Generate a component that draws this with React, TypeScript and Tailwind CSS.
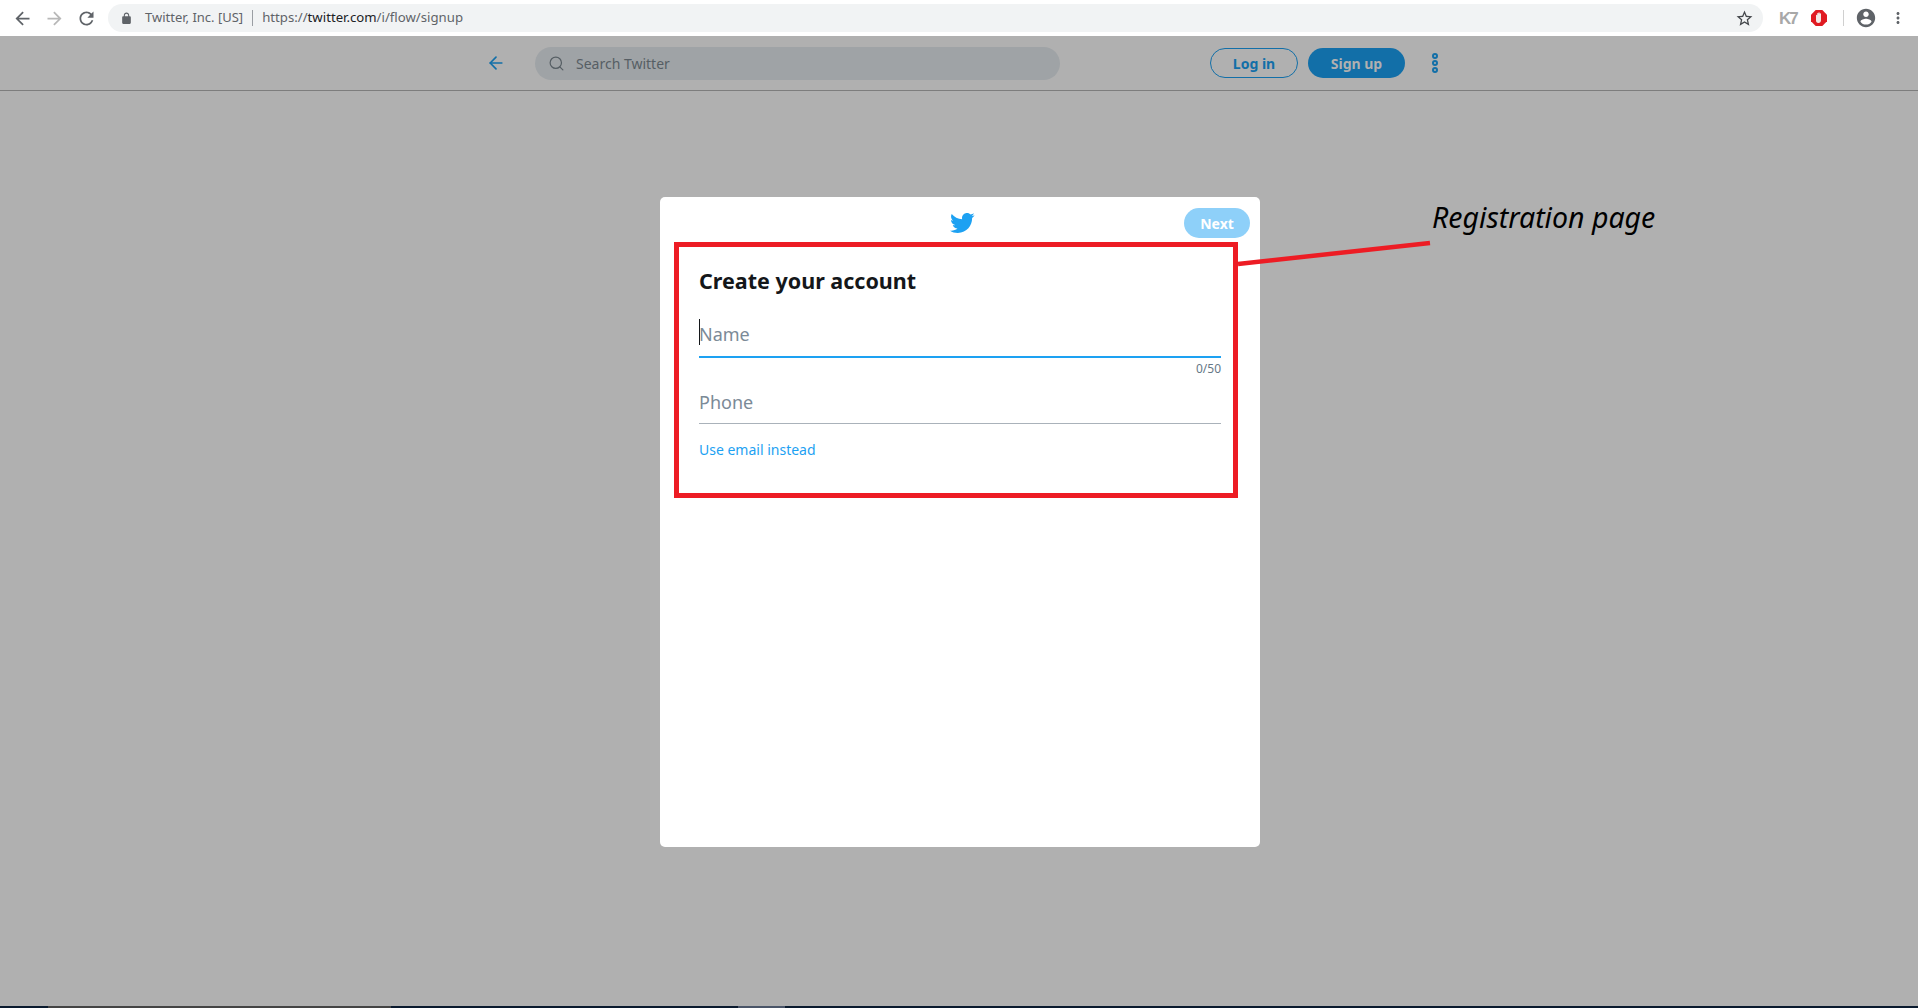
import { Search, ArrowLeft } from "lucide-react";

const BIRD =
  "M23.643 4.937c-.835.37-1.732.62-2.675.733.962-.576 1.7-1.49 2.048-2.578-.9.534-1.897.922-2.958 1.13-.85-.904-2.06-1.47-3.4-1.47-2.572 0-4.658 2.086-4.658 4.66 0 .364.042.718.12 1.06-3.873-.195-7.304-2.05-9.602-4.868-.4.69-.63 1.49-.63 2.342 0 1.616.823 3.043 2.072 3.878-.764-.025-1.482-.234-2.11-.583v.06c0 2.257 1.605 4.14 3.737 4.568-.392.106-.803.162-1.227.162-.3 0-.593-.028-.877-.082.593 1.85 2.313 3.198 4.352 3.234-1.595 1.25-3.604 1.995-5.786 1.995-.376 0-.747-.022-1.112-.065 2.062 1.323 4.51 2.093 7.14 2.093 8.57 0 13.255-7.098 13.255-13.254 0-.2-.005-.402-.014-.602.91-.658 1.7-1.477 2.323-2.41z";

const Glyph = ({ d, className }: { d: string; className: string }) => (
  <svg viewBox="0 0 24 24" className={className}>
    <path d={d} />
  </svg>
);

const BrowserBar = () => (
  <div className="h-9 shrink-0 bg-white flex items-center text-[#5f6368]">
    <Glyph
      d="M20 11H7.83l5.59-5.59L12 4l-8 8 8 8 1.41-1.41L7.83 13H20v-2z"
      className="ml-[12px] w-[21px] h-[21px] fill-[#5f6368]"
    />
    <Glyph
      d="M12 4l-1.41 1.41L16.17 11H4v2h12.17l-5.58 5.59L12 20l8-8z"
      className="ml-[11px] w-[21px] h-[21px] fill-[#b8b8b8]"
    />
    <Glyph
      d="M17.65 6.35C16.2 4.9 14.21 4 12 4c-4.42 0-7.99 3.58-7.99 8s3.57 8 7.99 8c3.73 0 6.84-2.55 7.73-6h-2.08c-.82 2.33-3.04 4-5.65 4-3.31 0-6-2.69-6-6s2.69-6 6-6c1.66 0 3.14.69 4.22 1.78L13 11h7V4l-2.35 2.35z"
      className="ml-[11px] w-[21px] h-[21px] fill-[#5f6368]"
    />
    <div className="ml-[11px] w-[1655px] h-7 rounded-full bg-[#f1f3f4] flex items-center text-[13px] font-['Noto_Sans',sans-serif]">
      <Glyph
        d="M18 8h-1V6c0-2.76-2.24-5-5-5S7 3.24 7 6v2H6c-1.1 0-2 .9-2 2v10c0 1.1.9 2 2 2h12c1.1 0 2-.9 2-2V10c0-1.1-.9-2-2-2zM9 6c0-1.66 1.34-3 3-3s3 1.34 3 3v2H9V6z"
        className="ml-[12px] w-[13px] h-[13px] fill-[#5f6368]"
      />
      <span className="ml-[12px]">Twitter, Inc. [US]</span>
      <span className="mx-[9px] w-px h-4 bg-[#9a9ea3]" />
      <span className="text-[13.2px]">
        https://<span className="text-[#202124]">twitter.com</span>/i/flow/signup
      </span>
      <Glyph
        d="M22 9.24l-7.19-.62L12 2 9.19 8.63 2 9.24l5.46 4.73L5.82 21 12 17.27 18.18 21l-1.63-7.03L22 9.24zM12 15.4l-3.76 2.27 1-4.28-3.32-2.88 4.38-.38L12 6.1l1.71 4.04 4.38.38-3.32 2.88 1 4.28L12 15.4z"
        className="ml-auto mr-[9px] w-[19px] h-[19px] fill-[#44474b]"
      />
    </div>
    <span className="ml-[16px] w-4 text-[17px] leading-none font-bold tracking-[-2px] text-[#a8a8a8] font-['Liberation_Sans',sans-serif]">K7</span>
    {/* adblock badge */}
    <svg viewBox="0 0 16 16" className="ml-[16px] w-4 h-4">
      <polygon points="4.7,0 11.3,0 16,4.7 16,11.3 11.3,16 4.7,16 0,11.3 0,4.7" fill="#e01b22" />
      <path d="M5 5.5c0-.9 1.2-.9 1.2 0V3.6c0-.9 1.2-.9 1.2 0V3c0-.9 1.3-.9 1.3 0v.8c0-.9 1.3-.9 1.3 0v6.4c0 1.4-.9 2.8-2.6 2.8-1.6 0-2.4-1-2.4-2.4z" fill="#f3e9e6" />
    </svg>
    <span className="ml-[16px] w-px h-4 bg-[#d0d0d0]" />
    <Glyph
      d="M12 2C6.48 2 2 6.48 2 12s4.48 10 10 10 10-4.48 10-10S17.52 2 12 2zm0 3c1.66 0 3 1.34 3 3s-1.34 3-3 3-3-1.34-3-3 1.34-3 3-3zm0 14.2c-2.5 0-4.71-1.28-6-3.22.03-1.99 4-3.08 6-3.08 1.99 0 5.97 1.09 6 3.08-1.29 1.94-3.5 3.22-6 3.22z"
      className="ml-[11px] w-[22px] h-[22px] fill-[#5f6368]"
    />
    <Glyph
      d="M12 8c1.1 0 2-.9 2-2s-.9-2-2-2-2 .9-2 2 .9 2 2 2zm0 2c-1.1 0-2 .9-2 2s.9 2 2 2 2-.9 2-2-.9-2-2-2zm0 6c-1.1 0-2 .9-2 2s.9 2 2 2 2-.9 2-2-.9-2-2-2z"
      className="ml-[12px] w-[18px] h-[18px] fill-[#5f6368]"
    />
  </div>
);

const TwitterHeader = () => (
  <div className="h-[55px] shrink-0 border-b border-[#7d7d7d] flex items-center pl-[486px] font-['Noto_Sans',sans-serif]">
    <ArrowLeft className="w-[20px] h-[20px] text-[#126fa8]" strokeWidth={2} />
    <div className="ml-[29px] w-[525px] h-[33px] rounded-full bg-[#9fa3a6] flex items-center text-[#565e64] text-[14px]">
      <Search className="ml-[13px] w-[17px] h-[17px] text-[#565e64]" strokeWidth={1.7} />
      <span className="ml-[11px]">Search Twitter</span>
    </div>
    <button className="ml-[150px] w-[88px] h-[30px] rounded-full border border-[#126fa8] text-[#126fa8] text-[14px] font-bold">Log in</button>
    <button className="ml-[10px] w-[97px] h-[30px] rounded-full bg-[#126fa8] text-[#b0b0b0] text-[14px] font-bold">Sign up</button>
    <div className="ml-[27px] flex flex-col gap-px">
      <span className="w-[6px] h-[6px] rounded-full border-2 border-[#126fa8]" />
      <span className="w-[6px] h-[6px] rounded-full border-2 border-[#126fa8]" />
      <span className="w-[6px] h-[6px] rounded-full border-2 border-[#126fa8]" />
    </div>
  </div>
);

const SignupModal = () => (
  <div className="ml-[660px] mt-[106px] w-[600px] h-[650px] rounded-[5px] bg-white font-['Noto_Sans',sans-serif]">
    <div className="h-[45px] relative flex items-center justify-center">
      <svg viewBox="0 0 24 24" className="w-[26px] h-[26px] ml-[4px] mt-[7px] fill-[#1da1f2]">
        <path d={BIRD} />
      </svg>
      <button className="absolute right-[10px] top-[11px] w-[66px] h-[30px] rounded-full bg-[#8ed0f9] text-white text-[14px] font-bold">Next</button>
    </div>
    <div className="ml-[14px] w-[564px] h-[256px] border-[5px] border-[#ed1c24] pl-[20px] pr-[12px]">
      <h1 className="mt-[19px] text-[21.5px] leading-[30px] font-bold text-[#14171a]">Create your account</h1>
      <div className="mt-[20px] h-[42px] border-b-2 border-[#1da1f2] flex items-center text-[18px] text-[#7b8a97] relative">
        <span className="absolute left-0 top-[3px] w-px h-[26px] bg-[#14171a]" />
        <span className="-mt-[3px]">Name</span>
      </div>
      <p className="mt-[3px] text-right text-[12px] leading-4 text-[#657786]">0/50</p>
      <div className="mt-[2px] h-[45px] border-b border-[#aab2ba] flex items-center text-[18px] text-[#7b8a97]">
        <span className="mt-[2px]">Phone</span>
      </div>
      <p className="mt-[16px] text-[14px] leading-5 text-[#1da1f2]">Use email instead</p>
    </div>
  </div>
);

const App = () => (
  <div className="relative h-screen flex flex-col overflow-hidden bg-[#b0b0b0]">
    <BrowserBar />
    <TwitterHeader />
    <div className="flex-1">
      <SignupModal />
    </div>
    <div className="h-[2px] shrink-0 bg-[#0a1a2e] flex">
      <span className="ml-[48px] w-[343px] bg-[#444444]" />
      <span className="ml-[347px] w-[47px] bg-[#4a5568]" />
    </div>
    {/* callout drawn over the page */}
    <svg className="absolute inset-0 w-full h-full pointer-events-none">
      <line x1="1238" y1="264" x2="1430" y2="243" stroke="#ed1c24" strokeWidth="4.5" />
    </svg>
    <span className="absolute left-[1432px] top-[197px] text-[28.5px] leading-10 italic text-black font-['Noto_Sans',sans-serif]">
      Registration page
    </span>
  </div>
);

export default App;
